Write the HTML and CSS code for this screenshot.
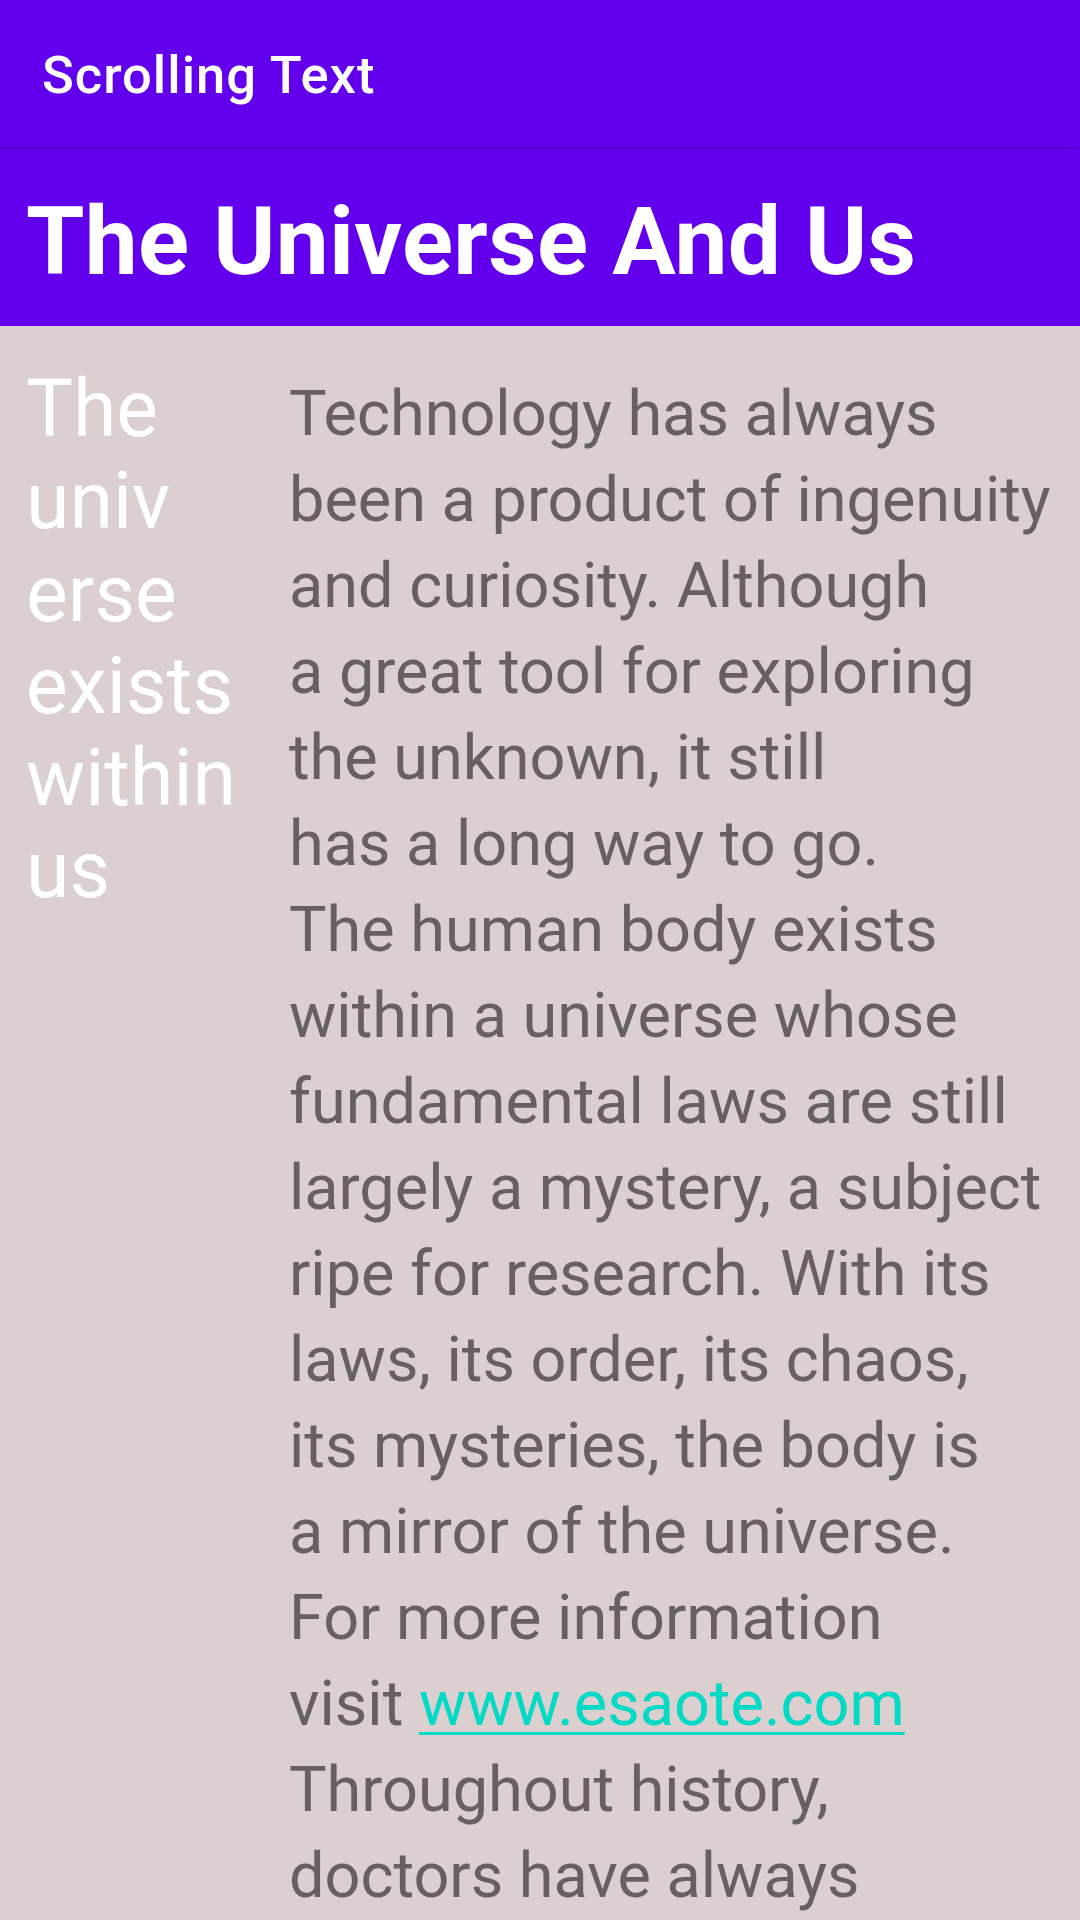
FILE: index.html
```html
<!DOCTYPE html>
<html lang="en">
<head>
<meta charset="utf-8">
<title>Scrolling Text</title>
<link rel="stylesheet" href="styles.css">
</head>
<body>
<div class="app">
  <header class="toolbar">
    <h1 class="toolbar-title">Scrolling Text</h1>
  </header>
  <div class="heading">
    <h2 class="heading-text">The Universe And Us</h2>
  </div>
  <main class="content">
    <div class="subheading">The univ erse exists within us</div>
    <div class="article">Technology has always been a product of ingenuity and curiosity. Although<br>a great tool for exploring the unknown, it still<br>has a long way to go.<br>The human body exists within a universe whose fundamental laws are still largely a mystery, a subject ripe for research. With its laws, its order, its chaos, its mysteries, the body is<br>a mirror of the universe.<br>For more information<br>visit <a class="link" href="#">www.esaote.com</a><br>Throughout history, doctors have always</div>
  </main>
</div>
</body>
</html>
```
FILE: styles.css
```css
html, body {
  margin: 0;
  padding: 0;
}
body {
  width: 1080px;
  height: 1920px;
  overflow: hidden;
  background: #dbcfd0;
  font-family: Roboto, "Liberation Sans", sans-serif;
}
.app {
  display: flex;
  flex-direction: column;
  height: 1920px;
}
.toolbar {
  position: relative;
  z-index: 2;
  height: 147px;
  box-sizing: border-box;
  padding: 45px 42px 0;
  background: #6200ee;
  box-shadow: 0 1px 4px rgba(0, 0, 0, 0.25);
}
.toolbar-title {
  margin: 0;
  font-size: 52.5px;
  line-height: 61.5px;
  font-weight: 500;
  letter-spacing: 1px;
  color: #ffffff;
}
.heading {
  height: 179px;
  box-sizing: border-box;
  padding: 40px 26px 0;
  background: #6200ee;
}
.heading-text {
  margin: 0;
  font-size: 94.5px;
  line-height: 110px;
  font-weight: 700;
  letter-spacing: 0.3px;
  color: #ffffff;
  white-space: nowrap;
}
.content {
  flex: 1;
  display: grid;
  grid-template-columns: 289px 1fr;
  background: #dbcfd0;
}
.subheading {
  padding: 37px 0 0 26px;
  width: 240px;
  font-size: 78.75px;
  line-height: 92.3px;
  color: #ffffff;
  overflow-wrap: break-word;
}
.article {
  padding: 45px 29px 0 0;
  font-size: 63px;
  line-height: 86px;
  color: #676060;
}
.link {
  color: #03dac5;
  text-decoration: underline;
  text-decoration-thickness: 3px;
  text-underline-offset: 7px;
}
```
